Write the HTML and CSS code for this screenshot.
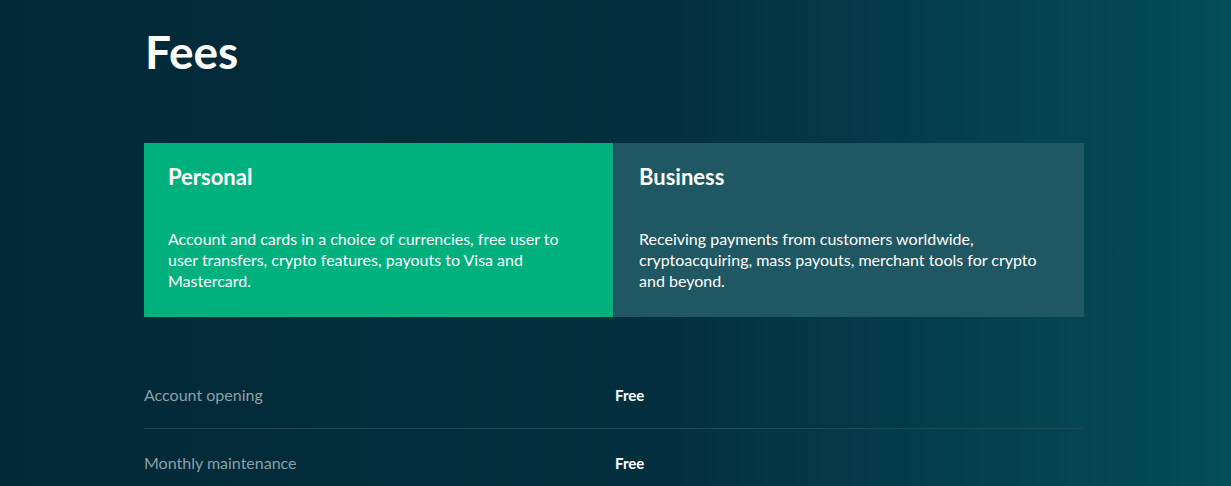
FILE: index.html
```html
<!DOCTYPE html>
<html lang="en">
<head>
  <meta charset="UTF-8" />
  <meta name="viewport" content="width=device-width, initial-scale=1.0"/>
  <title>Fees</title>
  <link rel="stylesheet" href="styles.css">
</head>
<body>
  <div class="container">
    <h1 class="title">Fees</h1>

    <!-- ================== Plan tabs ================== -->
    <div class="plans">
      <div class="plan plan-active">
        <h3 class="plan-name">Personal</h3>
        <p class="plan-text">Account and cards in a choice of currencies, free user to user transfers, crypto features, payouts to Visa and Mastercard.</p>
      </div>
      <div class="plan">
        <h3 class="plan-name">Business</h3>
        <p class="plan-text">Receiving payments from customers worldwide, cryptoacquiring, mass payouts, merchant tools for crypto and beyond.</p>
      </div>
    </div>

    <!-- ================== Fee rows ================== -->
    <div class="fees">
      <div class="fee-row">
        <span class="fee-label">Account opening</span>
        <span class="fee-value">Free</span>
      </div>
      <div class="fee-row">
        <span class="fee-label">Monthly maintenance</span>
        <span class="fee-value">Free</span>
      </div>
    </div>
  </div>
</body>
</html>
```

FILE: styles.css
```css
html,
body {
  height: 100%;
}
body {
  margin: 0;
  font-family: Lato, "Liberation Sans", sans-serif;
  color: #fff;
  background: linear-gradient(90deg, #022837 0%, #03303e 55%, #034e57 100%);
  overflow: hidden;
}
.container {
  width: 940px;
  margin-left: 144px;
  padding-top: 24px;
}
.title {
  margin: 0 0 0 1px;
  font-size: 46px;
  font-weight: 700;
  line-height: 56px;
}
.plans {
  display: grid;
  grid-template-columns: 469px 470px;
  gap: 1px;
  margin-top: 63px;
}
.plan {
  background-color: #1f5762;
  padding: 20px 24px 24px 25px;
  height: 174px;
  box-sizing: border-box;
}
.plan-active {
  background-color: #00b17e;
  padding-left: 24px;
}
.plan-name {
  margin: 0;
  font-size: 22px;
  font-weight: 700;
  line-height: 28px;
}
.plan-text {
  margin: 37px 0 0;
  font-size: 16px;
  line-height: 21px;
}
.fees {
  margin-top: 44px;
}
.fee-row {
  display: grid;
  grid-template-columns: 471px 1fr;
  align-items: center;
  height: 67px;
  border-bottom: 1px solid #1b4a55;
}
.fee-label {
  color: #8aa0a7;
  font-size: 16px;
}
.fee-value {
  font-size: 15px;
  font-weight: 700;
}
```
